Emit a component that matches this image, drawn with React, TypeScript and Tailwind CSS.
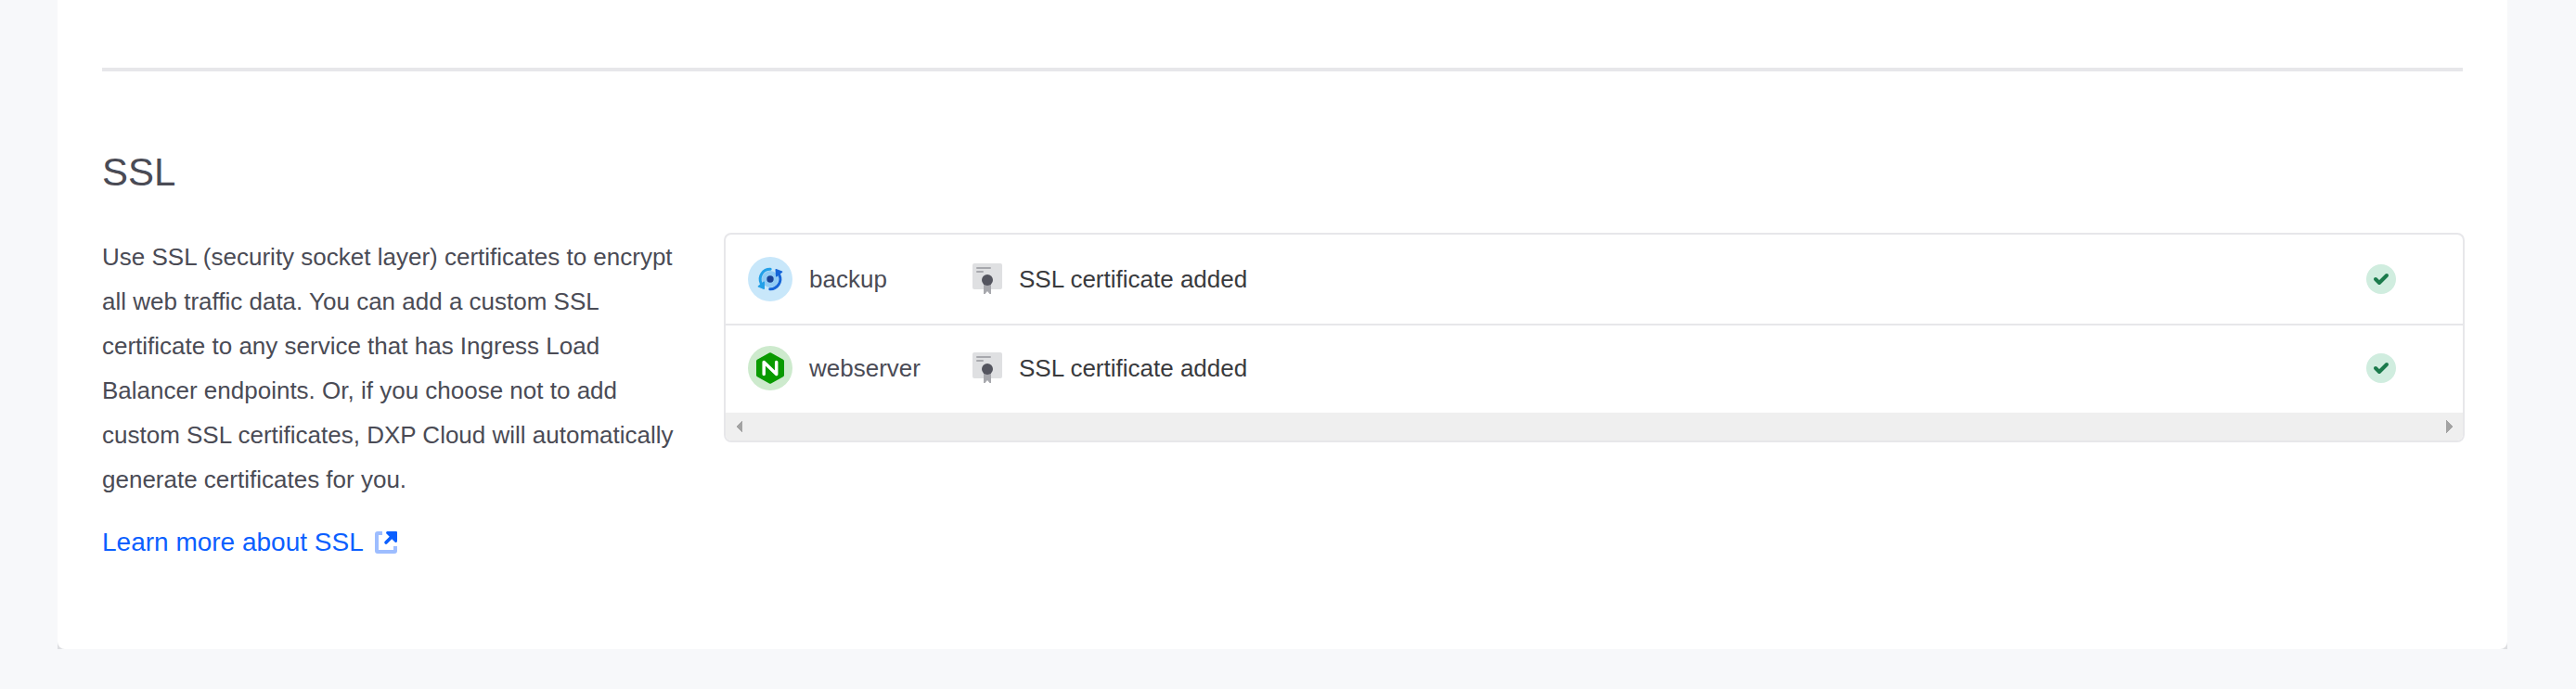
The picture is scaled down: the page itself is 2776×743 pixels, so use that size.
const BackupIcon = () => (
  <svg className="size-12 shrink-0" viewBox="0 0 48 48" fill="none">
    <circle cx="24" cy="24" r="24" fill="#c8e7fa" />
    <circle cx="24" cy="24" r="9" fill="#90cbf4" />
    <circle cx="24" cy="24" r="3.7" fill="#1a4296" />
    <path d="M24.200 13.300A10.700 10.700 0 0 0 14.200 28.500" stroke="#23a0e8" strokeWidth="3" strokeLinecap="round" />
    <path d="M23.800 34.700A10.700 10.700 0 0 0 33.800 19.500" stroke="#1565d8" strokeWidth="3" strokeLinecap="round" />
    <path d="M11 31.300l6-4.700q1-.6 1 .6v7q0 1-1 .7l-6-2.400q-.9-.5 0-1.200z" fill="#23a0e8" />
    <path d="M37 16.700l-6 4.700q-1 .6-1-.6l-.5-7q0-1 1-.7l6.500 2.400q.9.500 0 1.200z" fill="#1565d8" />
  </svg>
);

const NginxIcon = () => (
  <svg className="size-12 shrink-0" viewBox="0 0 48 48" fill="none">
    <circle cx="24" cy="24" r="24" fill="#cdeacd" />
    <path
      d="M23 7.500q1-.6 2 0l13 7.200q1 .6 1 1.700v15.200q0 1.100-1 1.700l-13 7.200q-1 .6-2 0l-13-7.200q-1-.6-1-1.700V16.400q0-1.100 1-1.700z"
      fill="#099a00"
    />
    <path d="M17.200 30.600V17.600l13.500 12.900V17.400" stroke="#fff" strokeWidth="3.500" strokeLinecap="round" strokeLinejoin="round" />
  </svg>
);

const CertificateIcon = () => (
  <svg className="h-9 w-8 shrink-0" viewBox="0 0 32 36" fill="none">
    <rect y="1" width="32" height="28" rx="2" fill="#dfe0e2" />
    <path d="M5 6h14M5 10h6" stroke="#a7a8ad" strokeWidth="2" strokeLinecap="round" />
    <path d="M12 24h8v10h-1.500L16 31l-2.500 3H12z" fill="#a7a8ad" />
    <circle cx="16" cy="19" r="6" fill="#54555f" />
  </svg>
);

const CheckIcon = () => (
  <svg className="size-8 shrink-0" viewBox="0 0 32 32" fill="none">
    <circle cx="16" cy="16" r="16" fill="#d0eddf" />
    <path d="M10 16l4 4 8-8" stroke="#1b7b4c" strokeWidth="4" strokeLinecap="round" strokeLinejoin="round" />
  </svg>
);

const ExternalIcon = () => (
  <svg className="size-6 shrink-0" viewBox="0 0 24 24" fill="none">
    <path d="M8 0H3a3 3 0 0 0-3 3v18a3 3 0 0 0 3 3h18a3 3 0 0 0 3-3v-5h-4v4H4V4h4z" fill="#9dbdff" />
    <path d="M12 12l7-7" stroke="#0b5fff" strokeWidth="3.600" strokeLinecap="round" />
    <path
      d="M13.500 0H23a1 1 0 0 1 1 1v9.500c0 1.300-1.500 2-2.500 1.100L12.500 2.500C11.600 1.500 12.200 0 13.500 0z"
      fill="#0b5fff"
    />
  </svg>
);

const services = [
  { name: "backup", Icon: BackupIcon },
  { name: "webserver", Icon: NginxIcon },
];

export default function App() {
  return (
    <div className="h-[743px] w-[2776px] overflow-hidden bg-[#f7f8fa] pr-[74px] pl-[62px] font-['Liberation_Sans',sans-serif] text-[26px] text-[#4a4b55]">
      <div className="h-[700px] bg-[#dddee1]">
        <section className="h-[700px] rounded-b-lg bg-white pt-[73px] pr-[46px] pl-12">
          <div className="mr-[2px] h-1 bg-[#e7e7ea]" />
          <h2 className="mt-[84px] text-[42px] leading-[50px]">SSL</h2>
          <div className="mt-10 flex items-start">
            <div className="w-[670px] shrink-0 pt-[2px]">
              <p className="leading-[48px] whitespace-nowrap">
                Use SSL (security socket layer) certificates to encrypt
                <br />
                all web traffic data. You can add a custom SSL
                <br />
                certificate to any service that has Ingress Load
                <br />
                Balancer endpoints. Or, if you choose not to add
                <br />
                custom SSL certificates, DXP Cloud will automatically
                <br />
                generate certificates for you.
              </p>
              <a href="#ssl" className="mt-[23px] flex h-[42px] items-center gap-3 text-[28px] leading-[42px] text-[#0b5fff]">
                <span>Learn more about SSL</span>
                <ExternalIcon />
              </a>
            </div>
            <div className="grow overflow-hidden rounded-lg border-2 border-[#e7e7ea]">
              {services.map(({ name, Icon }) => (
                <div
                  key={name}
                  className="flex h-24 items-center border-[#e7e7ea] pr-[72px] pl-6 not-first:border-t-2 not-first:pb-[2px]"
                >
                  <Icon />
                  <span className="ml-[18px] w-[176px]">{name}</span>
                  <CertificateIcon />
                  <span className="ml-[18px] grow text-[#393a3d]">SSL certificate added</span>
                  <CheckIcon />
                </div>
              ))}
              <div className="flex h-[30px] items-center justify-between bg-[#efefef] px-[11px]">
                <svg className="h-[14px] w-[7px]" viewBox="0 0 7 14" shapeRendering="crispEdges">
                  <path d="M7 0v14L0 7z" fill="#a3a3a3" />
                </svg>
                <svg className="h-[14px] w-[7px]" viewBox="0 0 7 14" shapeRendering="crispEdges">
                  <path d="M0 0v14l7-7z" fill="#a3a3a3" />
                </svg>
              </div>
            </div>
          </div>
        </section>
      </div>
    </div>
  );
}
